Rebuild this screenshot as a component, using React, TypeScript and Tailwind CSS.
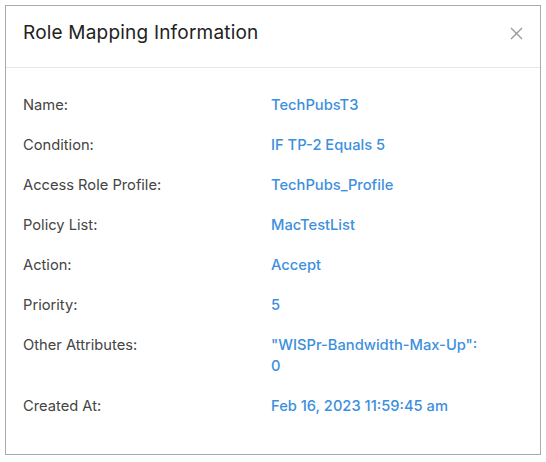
import React from "react";

const rows: [string, string][] = [
  ["Name:", "TechPubsT3"],
  ["Condition:", "IF TP-2 Equals 5"],
  ["Access Role Profile:", "TechPubs_Profile"],
  ["Policy List:", "MacTestList"],
  ["Action:", "Accept"],
  ["Priority:", "5"],
  ["Other Attributes:", "\"WISPr-Bandwidth-Max-Up\": 0"],
  ["Created At:", "Feb 16, 2023 11:59:45 am"],
];

export default function App() {
  return (
    <div className="bg-white w-[546px] h-[462px] pt-[5px] pl-[5px]" style={{ fontFamily: "Inter, 'Noto Sans', sans-serif" }}>
      <div className="w-[536px] h-[450px] border border-[#ababab] bg-white">
        <div className="h-[62px] flex items-start justify-between pt-[14px] pl-[17px] pr-[17px] border-b border-[#e6e6e6]">
          <h1 className="text-[19px] leading-[26px] text-[#222] font-normal tracking-[0.2px]">Role Mapping Information</h1>
          <svg width="13" height="13" viewBox="0 0 13 13" className="mt-[7px]">
            <path d="M1 1 L12 12 M12 1 L1 12" stroke="#9a9a9a" strokeWidth="1.4" />
          </svg>
        </div>
        <div className="grid grid-cols-[248px_1fr] gap-y-[19px] pl-[17px] pt-[27px] text-[14.7px] leading-[21px]">
          {rows.map(([k, v]) => (
            <React.Fragment key={k}>
              <div className="text-[#444]">{k}</div>
              <div className="text-[#3d8fde] font-medium max-w-[214px]">{v}</div>
            </React.Fragment>
          ))}
        </div>
      </div>
    </div>
  );
}
